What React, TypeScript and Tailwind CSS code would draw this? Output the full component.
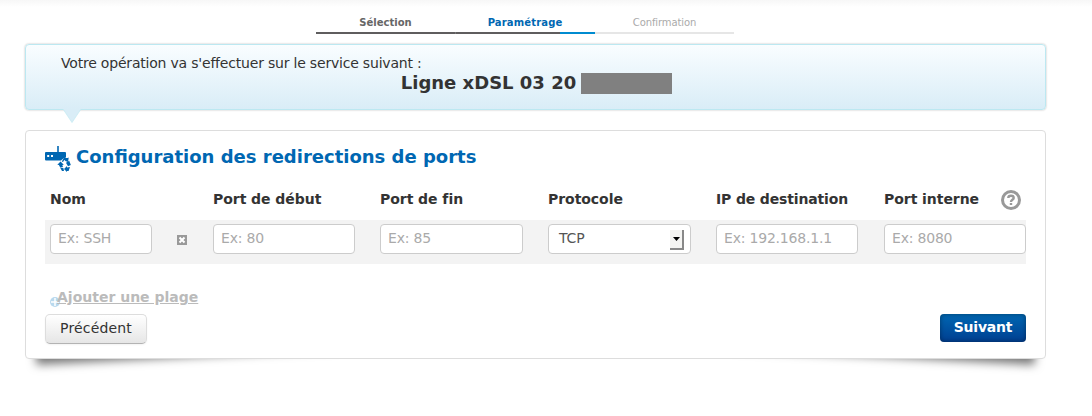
import React from "react";

const labels = "text-[14px] leading-[18px] font-bold text-[#333] tracking-[-0.05px]";
const field =
  "h-[30px] w-full rounded-[4px] border border-[#ccc] bg-white px-[7px] pb-[2px] text-[14px] leading-[18px] tracking-[-0.2px] text-[#555] placeholder:text-[#aaa] placeholder:opacity-100 outline-none";
const columns = "grid grid-cols-[163px_167px_168px_168px_168px_142px] pl-[5px]";

function RouterIcon() {
  return (
    <svg width="26" height="26" viewBox="0 0 26 26" className="shrink-0" fill="#0067b2">
      <path d="M12.200 0h1.600v6h6.200q1 0 1 1v4.500q-3 .3-5 3H1q-1 0-1-1V7q0-1 1-1h11.200z" />
      <path d="M2.200 9h2v2h-2zM6 9h2v2H6z" fill="#fff" />
      <path d="M16.800 15.500l2-3.500h3.700l1.200-.6-.6 4.600-3.600-1.200 1-.6-1.200-.2-1.300 2.100z" />
      <path d="M21 16.800l3.200-2 1.600 4.200-2.800 1.200z" />
      <path d="M12.300 18.800l3.200-3.200 3.300 3.100-1.500.2.700 2-2.800.6-1.300-2.600z" />
      <path d="M15.200 21.700l3.200.2.600 3.100h-2zM19 22.900l3-2.900v1.500l3-.5-1.400 3.900H22V26z" />
    </svg>
  );
}

function CloseIcon() {
  return (
    <svg width="10" height="10" viewBox="0 0 10 10">
      <path d="M0 0h10v10H0z" fill="#999" />
      <path d="M2.500 2.500l5 5M7.500 2.500l-5 5" stroke="#fff" strokeWidth="2" />
    </svg>
  );
}

function Step({ label, text, children }: { label: string; text: string; children: React.ReactNode }) {
  return (
    <li>
      <div className={`h-[15px] text-center text-[10px] leading-[12px] ${text}`}>{label}</div>
      <div className="flex h-[2px]">{children}</div>
    </li>
  );
}

export default function App() {
  return (
    <div className="h-[416px] w-[1092px] overflow-hidden bg-[linear-gradient(to_bottom,#f7f7f7_0px,#fff_7px)] font-['DejaVu_Sans',sans-serif] text-[#333]">
      <ol className="ml-[316px] grid grid-cols-[139px_140px_139px] pt-[17px]">
        <Step label="Sélection" text="font-bold text-[#666]">
          <span className="w-full bg-[#5f5d5e]" />
        </Step>
        <Step label="Paramétrage" text="font-bold text-[#0067b2] tracking-[0.15px]">
          <span className="w-px bg-[#777]" />
          <span className="flex-1 bg-[#5f5d5e]" />
          <span className="w-[35px] bg-[#008bd0]" />
        </Step>
        <Step label="Confirmation" text="text-[#aaa] tracking-[-0.1px]">
          <span className="w-full bg-[#e6e6e6]" />
        </Step>
      </ol>

      <section className="relative mt-[10px] ml-[25px] h-[66px] w-[1021px] rounded-[4px] border border-[#bce8f1] bg-linear-to-b from-[#f9fdff] to-[#d9edf7] shadow-[0_0_2px_rgba(0,0,0,0.3)]">
        <p className="pt-[9px] pl-[35px] text-[14px] leading-[18px] tracking-[-0.2px]">
          Votre opération va s'effectuer sur le service suivant :
        </p>
        <div className="flex items-center justify-center pl-[2px]">
          <span className="text-[18px] leading-[22px] font-bold">Ligne xDSL 03 20</span>
          <span className="ml-[5px] h-[21px] w-[91px] bg-[#808080]" />
        </div>
        <svg className="absolute top-[64px] left-[36px]" width="20" height="15" viewBox="0 0 20 15">
          <path d="M1 0L10 13.500L19 0z" fill="#d9edf7" />
          <path d="M1 0L10 13.500L19 0" fill="none" stroke="#c5ebf3" strokeWidth="0.800" />
        </svg>
      </section>

      <main className="relative isolate mt-[20px] ml-[25px] h-[229px] w-[1021px]">
        <div className="absolute bottom-[15px] left-[10px] -z-10 h-[20px] w-[300px] rotate-[-3deg] shadow-[0_13px_10px_#777]" />
        <div className="absolute right-[10px] bottom-[15px] -z-10 h-[20px] w-[300px] rotate-[3deg] shadow-[0_13px_10px_#777]" />
        <div className="h-full rounded-[4px] border border-[#ddd] bg-white px-[19px] pt-[15px]">
          <h1 className="flex h-[26px] items-start gap-[5px] text-[18px] leading-[22px] font-bold text-[#0067b2]">
            <RouterIcon />
            Configuration des redirections de ports
          </h1>
          <div className={`${columns} mt-[18px] h-[30px]`}>
            <span className={labels}>Nom</span>
            <span className={labels}>Port de début</span>
            <span className={labels}>Port de fin</span>
            <span className={labels}>Protocole</span>
            <span className="text-[14px] leading-[18px] font-bold tracking-[-0.15px] text-[#333]">IP de destination</span>
            <div className="flex justify-between">
              <span className={`${labels} whitespace-nowrap`}>Port interne</span>
              <svg className="mr-[5px]" width="20" height="20" viewBox="0 0 20 20">
                <circle cx="10" cy="10" r="8.500" fill="#fff" stroke="#999" strokeWidth="3" />
                <path d="M7.300 8C7.300 5 12.700 5 12.700 8C12.700 9.800 10 9.900 10 11.900M10 13.100v2" fill="none" stroke="#999" strokeWidth="2.400" />
              </svg>
            </div>
          </div>
          <div className={`${columns} h-[44px] bg-[#f3f3f3] pt-[4px]`}>
            <div className="flex h-[30px] items-center">
              <div className="w-[102px]"><input className={field} placeholder="Ex: SSH" /></div>
              <div className="mt-[2px] ml-[25px]"><CloseIcon /></div>
            </div>
            <div className="w-[142px]"><input className={field} placeholder="Ex: 80" /></div>
            <div className="w-[143px]"><input className={field} placeholder="Ex: 85" /></div>
            <div className="flex h-[30px] w-[143px] items-center justify-between rounded-[4px] border border-[#ccc] bg-white pr-[6px] pl-[10px] text-[14px] leading-[18px] tracking-[-0.15px] text-[#555]">
              <span className="-mt-[2px]">TCP</span>
              <span className="mt-px flex h-[20px] w-[14px] items-center justify-center border-r-2 border-b-2 border-[#888] bg-[#f4f4f2]">
                <svg width="7" height="4" viewBox="0 0 7 4"><path d="M0 0h7L3.500 4z" fill="#000" /></svg>
              </span>
            </div>
            <div className="w-[142px]"><input className={field} placeholder="Ex: 192.168.1.1" /></div>
            <div className="w-[142px]"><input className={field} placeholder="Ex: 8080" /></div>
          </div>
          <div className="mt-[24px] flex h-[26px] pl-[5px]">
            <svg className="mt-[9px]" width="10" height="10" viewBox="0 0 10 10">
              <circle cx="5" cy="5" r="5" fill="#b9d9ee" />
              <path d="M5 1v8M1 5h8" stroke="#fff" strokeWidth="1.500" />
            </svg>
            <a className="-ml-[3px] text-[14px] leading-[18px] font-bold text-[#bbb] underline">Ajouter une plage</a>
          </div>
          <div className="flex items-start justify-between">
            <button className="h-[30px] w-[102px] rounded-[5px] border border-[#ddd] border-b-[#b3b3b3] bg-linear-to-b from-white to-[#e6e6e6] pb-[2px] text-[14px] leading-[18px] tracking-[0.15px] shadow-[0_1px_2px_rgba(0,0,0,0.05)]">
              Précédent
            </button>
            <button className="h-[28px] w-[86px] rounded-[4px] bg-linear-to-b from-[#0067b2] to-[#003f91] pb-[2px] text-[14px] leading-[18px] font-bold tracking-[-0.2px] text-white shadow-[inset_0_0_5px_rgba(0,0,0,0.4)]">
              Suivant
            </button>
          </div>
        </div>
      </main>
    </div>
  );
}
